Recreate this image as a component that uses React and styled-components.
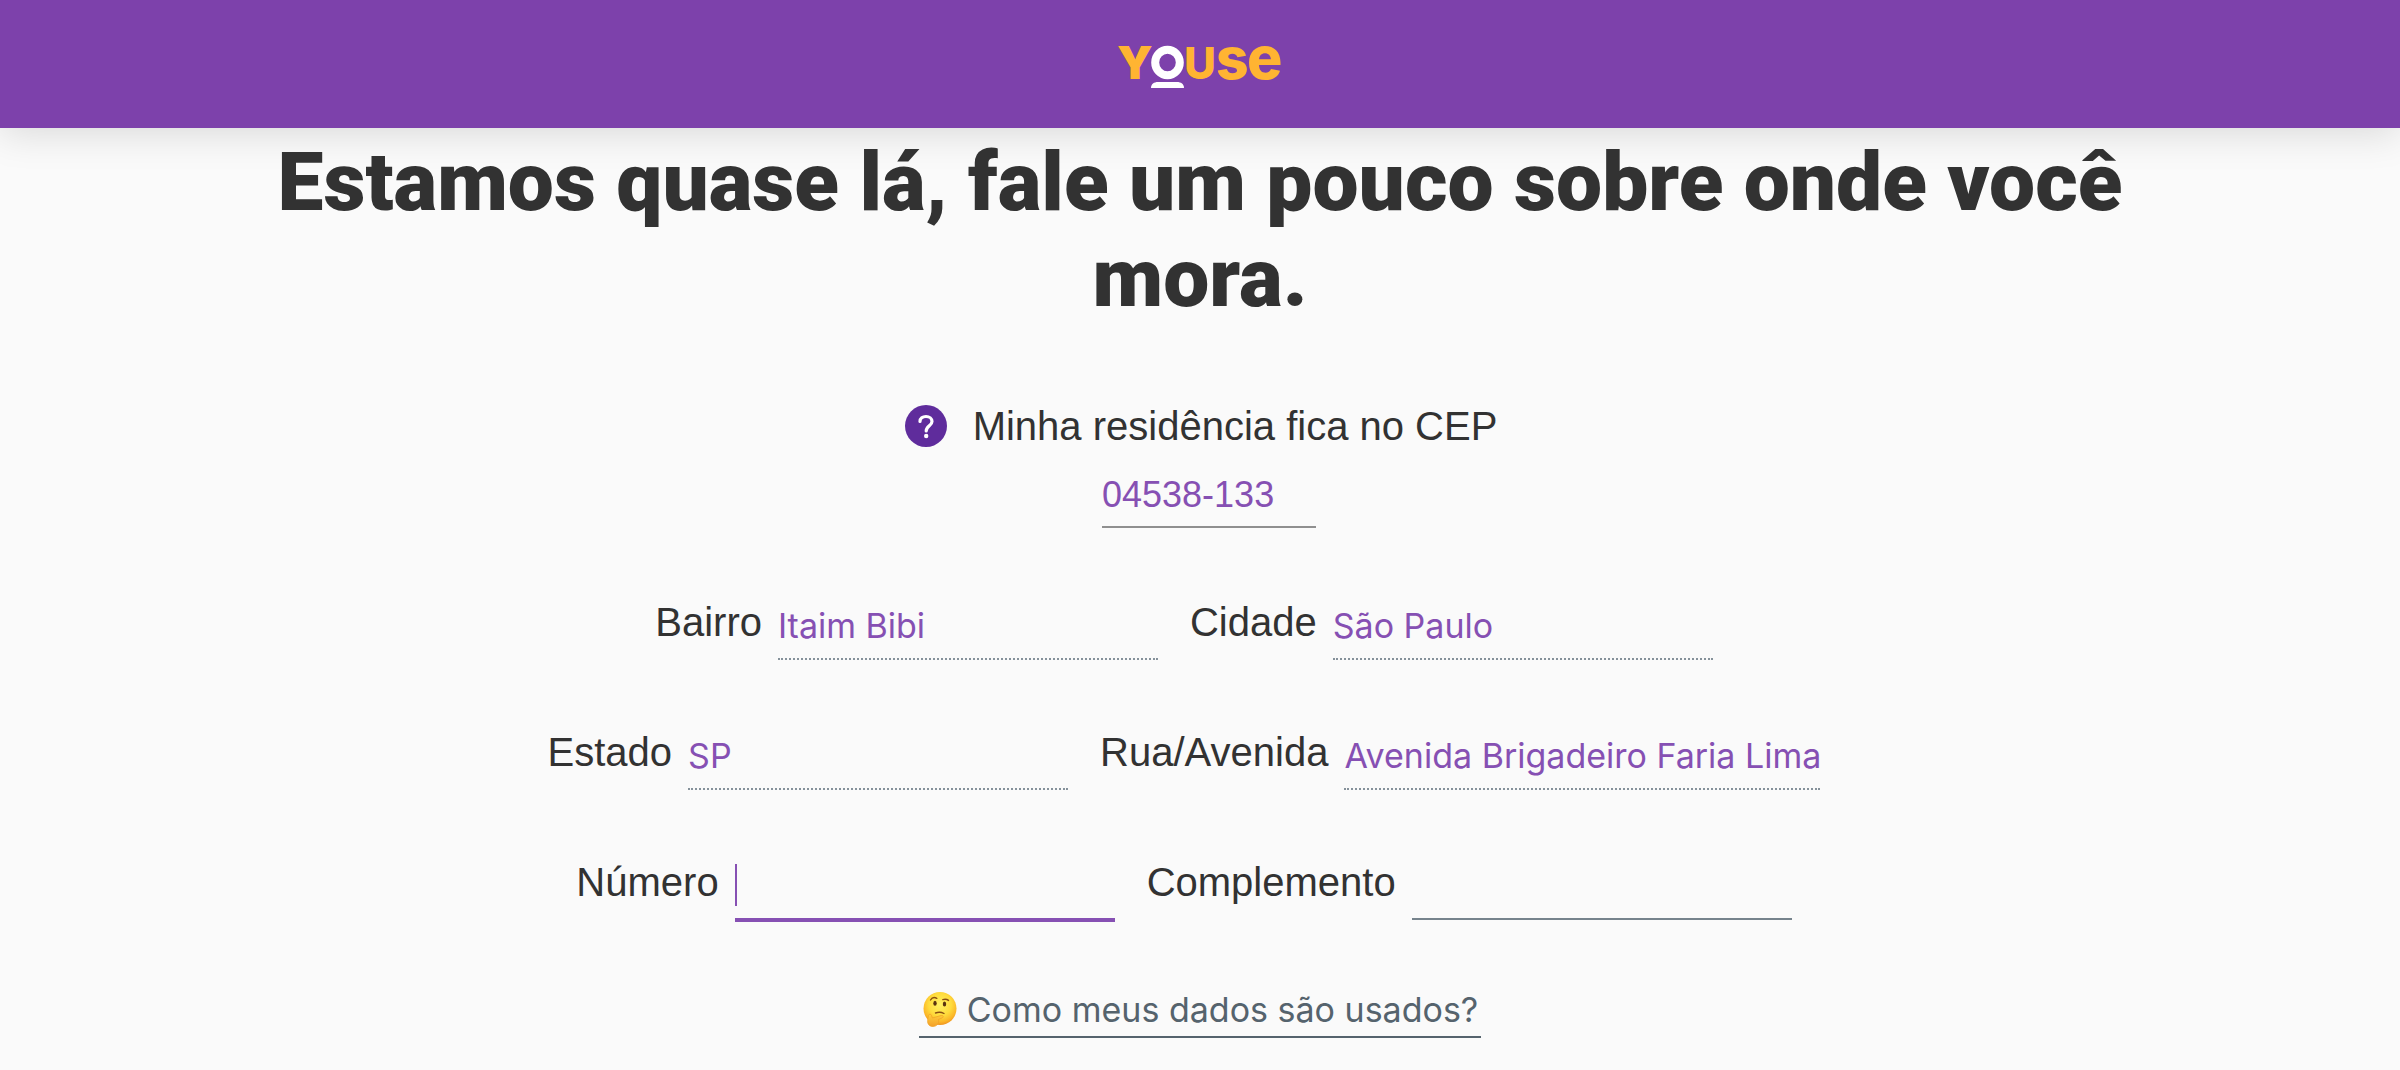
import React from "react";
import styled, { createGlobalStyle, css } from "styled-components";

const sans = '"Liberation Sans", Arial, sans-serif';
const ui = 'Inter, "Liberation Sans", sans-serif';

const GlobalStyle = createGlobalStyle`
  *, *::before, *::after { box-sizing: border-box; }
  body {
    margin: 0;
    background: #fafafa;
    color: #323232;
    font-family: ${sans};
  }
`;

const Header = styled.header`
  display: flex;
  align-items: center;
  justify-content: center;
  height: 128px;
  background: #7d41ab;
  box-shadow: 0 6px 36px rgba(0, 0, 0, 0.13);
`;

const HomeLink = styled.a`
  display: block;
  line-height: 0;
`;

const LogoSvg = styled.svg`
  overflow: visible;
`;

const Main = styled.main`
  display: flex;
  flex-direction: column;
  align-items: center;
  padding: 6px 192px 32px;
`;

const Title = styled.h1`
  margin: 0;
  font-family: Roboto, "Noto Sans", sans-serif;
  font-size: 82px;
  font-weight: 900;
  line-height: 96px;
  text-align: center;
`;

const Form = styled.form`
  display: flex;
  flex-direction: column;
  align-items: center;
  width: 100%;
  margin-top: 76px;
`;

const CepGroup = styled.div`
  display: flex;
  flex-direction: column;
  align-items: center;
  gap: 14px;
`;

const CepHeading = styled.div`
  display: flex;
  align-items: center;
  gap: 26px;
  padding-left: 2px;
`;

const HelpButton = styled.button`
  width: 42px;
  height: 42px;
  padding: 0;
  border: 0;
  border-radius: 50%;
  background: #5f2c9c;
  color: #fff;
  line-height: 0;
`;

const Label = styled.label`
  font-size: 40px;
  line-height: 48px;
  white-space: nowrap;
`;

const underlines = {
  plain: css`border-bottom: 2px solid #76838c;`,
  neutral: css`border-bottom: 2px solid #8f8f8f;`,
  locked: css`border-bottom: 2px dotted #85919a;`,
  active: css`border-bottom: 4px solid #8650b3;`,
};

const Input = styled.input`
  display: block;
  width: ${(p) => p.$width || 380}px;
  height: ${(p) => (p.$line === "active" ? 66 : 64)}px;
  padding: 0 0 ${(p) => (p.$line === "locked" ? 4 : 0)}px;
  border: 0;
  border-radius: 0;
  outline: 0;
  background: transparent;
  color: #8650b3;
  caret-color: transparent;
  font-family: ${(p) => (p.$line === "locked" ? ui : sans)};
  font-size: ${(p) => (p.$line === "locked" ? 34 : 36)}px;
  ${(p) => underlines[p.$line]}
`;

const CepInput = styled(Input)`
  margin-left: 18px;
`;

const Control = styled.div`
  position: relative;
`;

const Caret = styled.span`
  position: absolute;
  left: 0;
  top: 8px;
  width: 2px;
  height: 42px;
  background: #8650b3;
  pointer-events: none;
`;

const Row = styled.div`
  display: flex;
  height: 66px;
  justify-content: center;
  margin-top: ${(p) => (p.$first ? 68 : 64)}px;
`;

const Field = styled.div`
  display: flex;
  align-items: flex-start;
  gap: 16px;
  margin-right: 32px;

  ${Label} {
    padding-top: 2px;
  }
`;

const PrivacyButton = styled.button`
  display: flex;
  align-items: center;
  gap: 10px;
  margin-top: 64px;
  padding: 0 3px 2px 4px;
  border: 0;
  border-bottom: 2px solid #55636d;
  background: transparent;
  color: #55636d;
  font-family: ${ui};
  font-size: 34px;
  line-height: 48px;
  white-space: nowrap;
`;

function Logo() {
  return (
    <LogoSvg width="166" height="48" viewBox="0 0 166 48" role="img" aria-label="Youse">
      <ellipse cx="50.500" cy="22.500" rx="12.300" ry="12.700" fill="none" stroke="#fff" strokeWidth="8" />
      <path d="M34 48C34 44 37 42 41 42H60C64 42 67 44 67 48Z" fill="#fff" />
      <g fill="#ffb432" fontFamily="Inter, sans-serif" fontWeight="900">
        <text x="0" y="39" fontSize="46">Y</text>
        <text x="67" y="39" fontSize="44" fontWeight="800">U</text>
        <text x="99" y="39" fontSize="57" fontWeight="800">s</text>
        <text x="130" y="39" fontSize="59" fontWeight="800">e</text>
      </g>
    </LogoSvg>
  );
}

function QuestionMark() {
  return (
    <svg width="42" height="42" viewBox="0 0 42 42" fill="none" aria-hidden="true">
      <path
        d="M15 16.500C15 13.300 17.600 11.500 21 11.500C24.500 11.500 27 13.500 27 16.500C27 20.700 21.200 21 21.200 26"
        stroke="currentColor"
        strokeWidth="3.200"
        strokeLinecap="round"
      />
      <circle cx="21.200" cy="31" r="2.200" fill="currentColor" />
    </svg>
  );
}

function ThinkingFace() {
  return (
    <svg width="34" height="36" viewBox="0 0 34 36" fill="none" aria-hidden="true">
      <defs>
        <radialGradient id="face" cx="50%" cy="38%" r="62%">
          <stop offset="0" stopColor="#fff163" />
          <stop offset="0.550" stopColor="#ffdc3d" />
          <stop offset="0.850" stopColor="#fbb628" />
          <stop offset="1" stopColor="#ef9420" />
        </radialGradient>
        <linearGradient id="hand" x1="0" y1="0" x2="0" y2="1">
          <stop offset="0" stopColor="#ffcf3d" />
          <stop offset="1" stopColor="#f3a02a" />
        </linearGradient>
      </defs>
      <circle cx="17" cy="16.500" r="16.500" fill="url(#face)" />
      <ellipse cx="12" cy="11.300" rx="1.700" ry="2.500" fill="#5a3310" />
      <ellipse cx="21.500" cy="12" rx="1.700" ry="2.500" fill="#5a3310" />
      <path d="M7.500 8C9 5.500 11.500 5 13.800 6.300" stroke="#8a4f12" strokeWidth="1.400" strokeLinecap="round" />
      <path d="M19.800 7.600C21.800 7 24 7.200 25.500 8.400" stroke="#8a4f12" strokeWidth="1.400" strokeLinecap="round" />
      <path d="M12.500 21C15.500 19.800 18.500 20.100 21 21.500" stroke="#8a4f12" strokeWidth="1.400" strokeLinecap="round" />
      <path
        d="M5.500 23.500C6 21.800 8 21.700 8.500 23.500L9.300 26L18 23.500C20.500 23 21 25 19 26L15.500 27.500C16.500 31.500 13.500 34.500 10 34.500C6.500 34.500 4.300 32 4.600 28.500Z"
        fill="url(#hand)"
        stroke="#f0a024"
        strokeWidth="0.700"
      />
    </svg>
  );
}

const rows = [
  [
    { id: "bairro", label: "Bairro", value: "Itaim Bibi", line: "locked" },
    { id: "cidade", label: "Cidade", value: "São Paulo", line: "locked" },
  ],
  [
    { id: "estado", label: "Estado", value: "SP", line: "locked" },
    { id: "rua", label: "Rua/Avenida", value: "Avenida Brigadeiro Faria Lima", line: "locked", width: 476 },
  ],
  [
    { id: "numero", label: "Número", value: "", line: "active" },
    { id: "complemento", label: "Complemento", value: "", line: "plain" },
  ],
];

export default function App() {
  return (
    <>
      <GlobalStyle />
      <Header>
        <HomeLink href="#">
          <Logo />
        </HomeLink>
      </Header>
      <Main>
        <Title>Estamos quase lá, fale um pouco sobre onde você mora.</Title>
        <Form>
          <CepGroup>
            <CepHeading>
              <HelpButton type="button" aria-label="Ajuda">
                <QuestionMark />
              </HelpButton>
              <Label htmlFor="cep">Minha residência fica no CEP</Label>
            </CepHeading>
            <CepInput id="cep" $line="neutral" $width={214} defaultValue="04538-133" />
          </CepGroup>
          {rows.map((fields, i) => (
            <Row key={fields[0].id} $first={i === 0}>
              {fields.map((f) => (
                <Field key={f.id}>
                  <Label htmlFor={f.id}>{f.label}</Label>
                  <Control>
                    <Input
                      id={f.id}
                      $line={f.line}
                      $width={f.width}
                      defaultValue={f.value}
                      readOnly={f.line === "locked"}
                      autoFocus={f.line === "active"}
                    />
                    {f.line === "active" && <Caret />}
                  </Control>
                </Field>
              ))}
            </Row>
          ))}
          <PrivacyButton type="button">
            <ThinkingFace />
            Como meus dados são usados?
          </PrivacyButton>
        </Form>
      </Main>
    </>
  );
}
